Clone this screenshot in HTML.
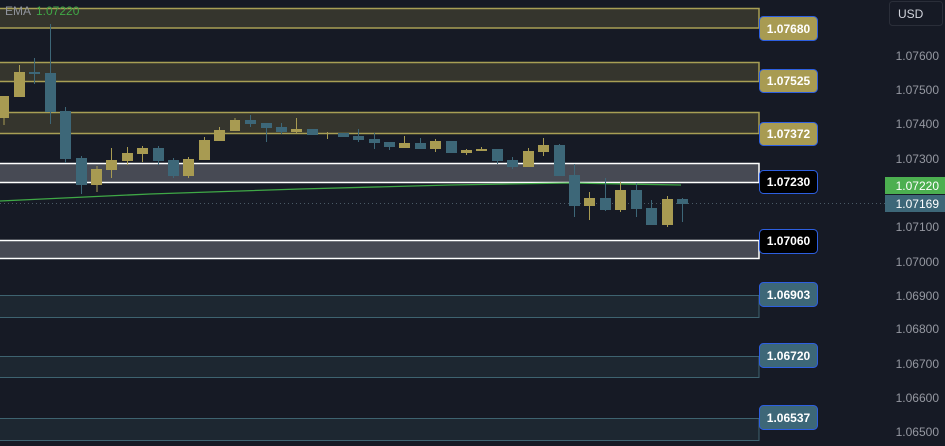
<!DOCTYPE html>
<html><head><style>
body{margin:0;background:#161a25;width:945px;height:446px;overflow:hidden;font-family:"Liberation Sans",sans-serif}
svg{position:absolute;left:0;top:0}
</style></head><body>
<svg width="945" height="446" xmlns="http://www.w3.org/2000/svg" font-family="Liberation Sans, sans-serif">
<rect width="945" height="446" fill="#161a25"/>
<g stroke="#a89f55" stroke-width="1.5" fill="#35352d">
<rect x="-2" y="8.5" width="761" height="19.5"/>
<rect x="-2" y="62.5" width="761" height="19"/>
<rect x="-2" y="112.5" width="761" height="21"/>
</g>
<g stroke="#ffffff" stroke-width="1.5" fill="#474a54">
<rect x="-2" y="163.5" width="761" height="19"/>
<rect x="-2" y="240.5" width="761" height="18"/>
</g>
<g stroke="#3e6370" stroke-width="1" fill="#1d2731">
<rect x="-2" y="295.5" width="761" height="22"/>
<rect x="-2" y="356.5" width="761" height="21"/>
<rect x="-2" y="418.5" width="761" height="22"/>
</g>
<line x1="0" y1="203.5" x2="885" y2="203.5" stroke="#4a5a66" stroke-dasharray="1,3"/>
<polyline points="0,201 150,194 300,189 450,185 570,183 681,185" fill="none" stroke="#3fa846" stroke-width="1.3"/>
<g id="c"></g>
<g>
<!-- candles: x, top, bottom, wickTop, wickBot, color -->
</g>
<g fill="#a89b52" stroke="#a89b52">
<line x1="4" y1="96" x2="4" y2="125"/><rect x="-1" y="96" width="10" height="22" stroke="none"/>
<line x1="19.5" y1="65" x2="19.5" y2="97"/><rect x="14" y="72" width="11" height="25" stroke="none"/>
<line x1="97" y1="166" x2="97" y2="192"/><rect x="91" y="169" width="11" height="16" stroke="none"/>
<line x1="111.5" y1="148" x2="111.5" y2="178"/><rect x="106" y="160" width="11" height="10" stroke="none"/>
<line x1="127.5" y1="147" x2="127.5" y2="165"/><rect x="122" y="153" width="11" height="8" stroke="none"/>
<line x1="142.5" y1="146" x2="142.5" y2="162"/><rect x="137" y="148" width="11" height="6" stroke="none"/>
<line x1="188.5" y1="157" x2="188.5" y2="178"/><rect x="183" y="159" width="11" height="17" stroke="none"/>
<line x1="204.5" y1="137" x2="204.5" y2="160"/><rect x="199" y="140" width="11" height="20" stroke="none"/>
<line x1="219.5" y1="127" x2="219.5" y2="141"/><rect x="214" y="130" width="11" height="11" stroke="none"/>
<line x1="235" y1="118" x2="235" y2="131"/><rect x="230" y="120" width="10" height="11" stroke="none"/>
<line x1="296.5" y1="118" x2="296.5" y2="133"/><rect x="291" y="129" width="11" height="3" stroke="none"/>
<line x1="327.5" y1="132" x2="327.5" y2="139"/>
<line x1="404.5" y1="136" x2="404.5" y2="148"/><rect x="399" y="143" width="11" height="5" stroke="none"/>
<line x1="435.5" y1="139" x2="435.5" y2="152"/><rect x="430" y="141" width="11" height="8" stroke="none"/>
<line x1="466.5" y1="149" x2="466.5" y2="155"/><rect x="461" y="150" width="11" height="3" stroke="none"/>
<line x1="481.5" y1="147" x2="481.5" y2="151"/><rect x="476" y="149" width="11" height="2" stroke="none"/>
<line x1="528.5" y1="148" x2="528.5" y2="167"/><rect x="523" y="151" width="11" height="16" stroke="none"/>
<line x1="543.5" y1="138" x2="543.5" y2="156"/><rect x="538" y="145" width="11" height="7" stroke="none"/>
<line x1="589.5" y1="192" x2="589.5" y2="220"/><rect x="584" y="198" width="11" height="8" stroke="none"/>
<line x1="620.5" y1="182" x2="620.5" y2="212"/><rect x="615" y="190" width="11" height="20" stroke="none"/>
<line x1="667.5" y1="196" x2="667.5" y2="227"/><rect x="662" y="199" width="11" height="26" stroke="none"/>
</g>
<g fill="#3d6778" stroke="#3d6778">
<line x1="34.5" y1="58" x2="34.5" y2="84"/><rect x="29" y="72" width="11" height="2" stroke="none"/>
<line x1="50.5" y1="24" x2="50.5" y2="124"/><rect x="45" y="73" width="11" height="39" stroke="none"/>
<line x1="65.5" y1="107" x2="65.5" y2="163"/><rect x="60" y="111" width="11" height="48" stroke="none"/>
<line x1="81.5" y1="156" x2="81.5" y2="194"/><rect x="76" y="158" width="11" height="27" stroke="none"/>
<line x1="158.5" y1="146" x2="158.5" y2="165"/><rect x="153" y="148" width="11" height="13" stroke="none"/>
<line x1="173.5" y1="158" x2="173.5" y2="178"/><rect x="168" y="160" width="11" height="16" stroke="none"/>
<line x1="250.5" y1="115" x2="250.5" y2="127"/><rect x="245" y="120" width="11" height="4" stroke="none"/>
<line x1="266.5" y1="123" x2="266.5" y2="142"/><rect x="261" y="123" width="11" height="5" stroke="none"/>
<line x1="281.5" y1="123" x2="281.5" y2="134"/><rect x="276" y="127" width="11" height="5" stroke="none"/>
<rect x="307" y="129" width="11" height="6" stroke="none"/>
<rect x="338" y="133" width="11" height="4" stroke="none"/>
<line x1="358.5" y1="129" x2="358.5" y2="142"/><rect x="353" y="136" width="11" height="4" stroke="none"/>
<line x1="374.5" y1="133" x2="374.5" y2="149"/><rect x="369" y="139" width="11" height="4" stroke="none"/>
<line x1="389.5" y1="142" x2="389.5" y2="150"/><rect x="384" y="142" width="11" height="5" stroke="none"/>
<line x1="420.5" y1="138" x2="420.5" y2="149"/><rect x="415" y="143" width="11" height="6" stroke="none"/>
<rect x="446" y="141" width="11" height="12" stroke="none"/>
<line x1="497.5" y1="149" x2="497.5" y2="164"/><rect x="492" y="149" width="11" height="12" stroke="none"/>
<line x1="512.5" y1="157" x2="512.5" y2="169"/><rect x="507" y="160" width="11" height="7" stroke="none"/>
<line x1="559.5" y1="144" x2="559.5" y2="176"/><rect x="554" y="145" width="11" height="31" stroke="none"/>
<line x1="574.5" y1="164" x2="574.5" y2="217"/><rect x="569" y="175" width="11" height="31" stroke="none"/>
<line x1="605.5" y1="178" x2="605.5" y2="211"/><rect x="600" y="198" width="11" height="12" stroke="none"/>
<line x1="636.5" y1="183" x2="636.5" y2="217"/><rect x="631" y="190" width="11" height="19" stroke="none"/>
<line x1="651.5" y1="200" x2="651.5" y2="225"/><rect x="646" y="208" width="11" height="17" stroke="none"/>
<line x1="682.5" y1="198" x2="682.5" y2="222"/><rect x="677" y="199" width="11" height="5" stroke="none"/>
</g>
<text x="5" y="15" font-size="12" fill="#8f939c">EMA</text>
<text x="36" y="15" font-size="12" fill="#3fa846">1.07220</text>
<g font-size="12" font-weight="bold" text-anchor="middle">
<rect x="759.5" y="16.5" width="58" height="24" rx="4" fill="#a89b52" stroke="#2d5fe0"/><text x="788.5" y="33" fill="#fff">1.07680</text>
<rect x="759.5" y="69.5" width="58" height="23" rx="4" fill="#a89b52" stroke="#2d5fe0"/><text x="788.5" y="85" fill="#fff">1.07525</text>
<rect x="759.5" y="122.5" width="58" height="23" rx="4" fill="#a89b52" stroke="#2d5fe0"/><text x="788.5" y="138" fill="#fff">1.07372</text>
<rect x="759.5" y="170.5" width="58" height="23" rx="4" fill="#000" stroke="#2d5fe0"/><text x="788.5" y="186" fill="#fff">1.07230</text>
<rect x="759.5" y="229.5" width="58" height="24" rx="4" fill="#000" stroke="#2d5fe0"/><text x="788.5" y="245" fill="#fff">1.07060</text>
<rect x="759.5" y="282.5" width="58" height="24" rx="4" fill="#3d6778" stroke="#2d5fe0"/><text x="788.5" y="299" fill="#fff">1.06903</text>
<rect x="759.5" y="343.5" width="58" height="24" rx="4" fill="#3d6778" stroke="#2d5fe0"/><text x="788.5" y="360" fill="#fff">1.06720</text>
<rect x="759.5" y="405.5" width="58" height="24" rx="4" fill="#3d6778" stroke="#2d5fe0"/><text x="788.5" y="422" fill="#fff">1.06537</text>
</g>
<rect x="889.5" y="1.5" width="53" height="24" rx="3" fill="#161a25" stroke="#2a2e39"/>
<text x="898" y="18" font-size="12" fill="#d1d4dc">USD</text>
<g font-size="12" fill="#9598a1" text-anchor="end">
<text x="939" y="60">1.07600</text>
<text x="939" y="94">1.07500</text>
<text x="939" y="128">1.07400</text>
<text x="939" y="163">1.07300</text>
<text x="939" y="231">1.07100</text>
<text x="939" y="266">1.07000</text>
<text x="939" y="300">1.06900</text>
<text x="939" y="333">1.06800</text>
<text x="939" y="368">1.06700</text>
<text x="939" y="402">1.06600</text>
<text x="939" y="436">1.06500</text>
</g>
<rect x="885" y="177" width="60" height="17" fill="#4caf50"/>
<text x="939" y="190" font-size="12" fill="#fff" text-anchor="end">1.07220</text>
<rect x="885" y="195" width="60" height="17" fill="#3d6778"/>
<text x="939" y="208" font-size="12" fill="#fff" text-anchor="end">1.07169</text>
</svg>
</body></html>
